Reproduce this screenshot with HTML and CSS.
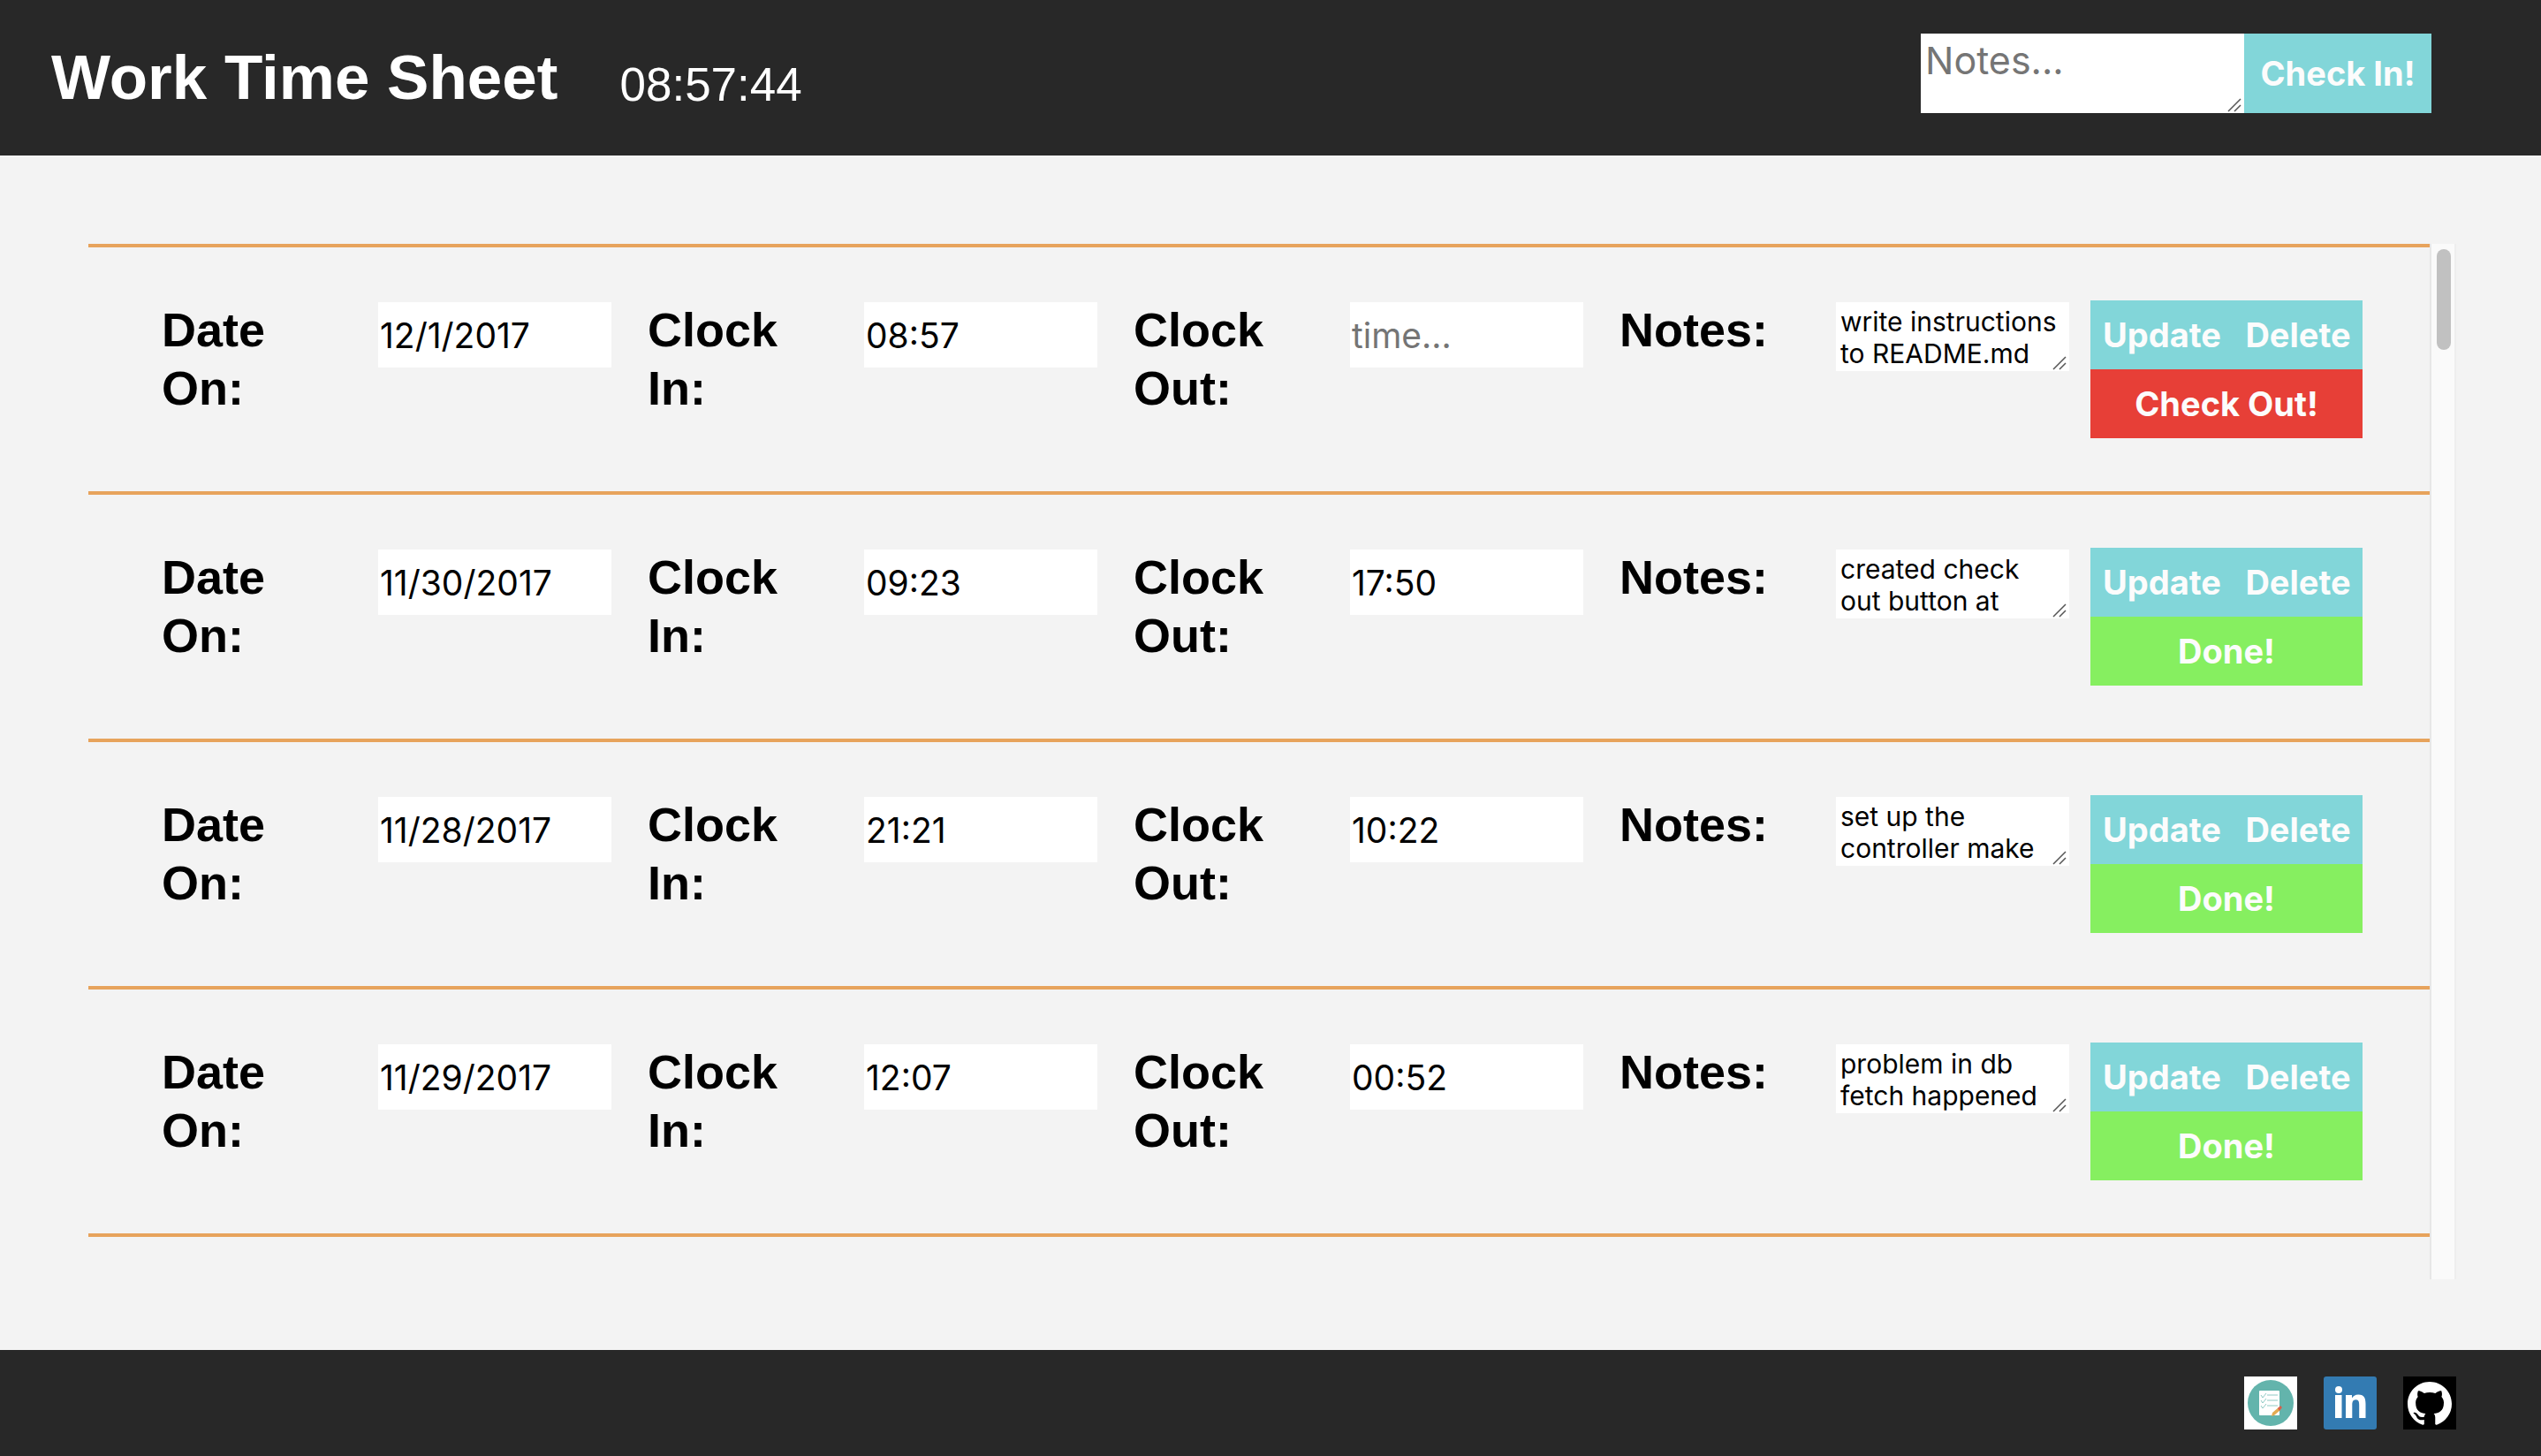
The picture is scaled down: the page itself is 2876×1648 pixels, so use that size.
FILE: index.html
```html
<!DOCTYPE html>
<html lang="en">
<head>
<meta charset="utf-8">
<meta name="viewport" content="width=device-width, initial-scale=1">
<title>Work Time Sheet</title>
<link rel="stylesheet" href="styles.css">
</head>
<body>
<header class="top-bar">
  <h1 class="title">Work Time Sheet</h1>
  <time class="clock">08:57:44</time>
  <form class="check-in">
    <textarea class="check-in-notes" placeholder="Notes..." aria-label="Notes"></textarea>
    <button class="btn check-in-btn" type="button">Check In!</button>
  </form>
</header>

<main class="sheet">
  <div class="entries">
    <form class="entry">
      <div class="fields">
        <div class="field"><label for="date-1">Date On:</label><input id="date-1" type="text" value="12/1/2017"></div>
        <div class="field"><label for="in-1">Clock In:</label><input id="in-1" type="text" value="08:57"></div>
        <div class="field"><label for="out-1">Clock Out:</label><input id="out-1" type="text" placeholder="time..."></div>
        <div class="field"><label for="notes-1">Notes:</label><textarea id="notes-1">write instructions to README.md</textarea></div>
      </div>
      <div class="actions">
        <button class="btn" type="button">Update</button><button class="btn" type="button">Delete</button>
        <button class="btn wide out" type="button">Check Out!</button>
      </div>
    </form>
    <form class="entry">
      <div class="fields">
        <div class="field"><label for="date-2">Date On:</label><input id="date-2" type="text" value="11/30/2017"></div>
        <div class="field"><label for="in-2">Clock In:</label><input id="in-2" type="text" value="09:23"></div>
        <div class="field"><label for="out-2">Clock Out:</label><input id="out-2" type="text" placeholder="time..." value="17:50"></div>
        <div class="field"><label for="notes-2">Notes:</label><textarea id="notes-2">created check out button at</textarea></div>
      </div>
      <div class="actions">
        <button class="btn" type="button">Update</button><button class="btn" type="button">Delete</button>
        <button class="btn wide done" type="button">Done!</button>
      </div>
    </form>
    <form class="entry">
      <div class="fields">
        <div class="field"><label for="date-3">Date On:</label><input id="date-3" type="text" value="11/28/2017"></div>
        <div class="field"><label for="in-3">Clock In:</label><input id="in-3" type="text" value="21:21"></div>
        <div class="field"><label for="out-3">Clock Out:</label><input id="out-3" type="text" placeholder="time..." value="10:22"></div>
        <div class="field"><label for="notes-3">Notes:</label><textarea id="notes-3">set up the controller make</textarea></div>
      </div>
      <div class="actions">
        <button class="btn" type="button">Update</button><button class="btn" type="button">Delete</button>
        <button class="btn wide done" type="button">Done!</button>
      </div>
    </form>
    <form class="entry">
      <div class="fields">
        <div class="field"><label for="date-4">Date On:</label><input id="date-4" type="text" value="11/29/2017"></div>
        <div class="field"><label for="in-4">Clock In:</label><input id="in-4" type="text" value="12:07"></div>
        <div class="field"><label for="out-4">Clock Out:</label><input id="out-4" type="text" placeholder="time..." value="00:52"></div>
        <div class="field"><label for="notes-4">Notes:</label><textarea id="notes-4">problem in db fetch happened</textarea></div>
      </div>
      <div class="actions">
        <button class="btn" type="button">Update</button><button class="btn" type="button">Delete</button>
        <button class="btn wide done" type="button">Done!</button>
      </div>
    </form>
  </div>
  <div class="scroll-track" aria-hidden="true"><div class="scroll-thumb"></div></div>
</main>

<footer class="bottom-bar">
  <a class="badge" href="#portfolio" aria-label="Portfolio">
    <svg viewBox="0 0 60 60">
      <rect width="60" height="60" fill="#fff"/>
      <circle cx="30" cy="30" r="26" fill="#63b4ac"/>
      <rect x="17" y="16" width="23" height="28" rx="1" fill="#fff"/>
      <g fill="none" stroke="#8fcac4" stroke-width="1">
        <path d="M19 21l2 3 4-5M19 27l2 3 4-5M19 33l2 3 4-5"/>
        <path d="M26 21h12M26 27h12M26 33h12"/>
      </g>
      <path d="M31 45l1-4 7-6 2 3-7 6z" fill="#e2ab52"/>
      <path d="M38 36l3-3 2 2-3 4z" fill="#d85f4c"/>
    </svg>
  </a>
  <a class="badge" href="#linkedin" aria-label="LinkedIn">
    <svg viewBox="0 0 60 60">
      <rect width="60" height="60" rx="3" fill="#337bb2"/>
      <circle cx="17" cy="15" r="4" fill="#fff"/>
      <path fill="#fff" d="M13 21h7.500v26H13zM25 21h7v3.600c1.200-2.300 3.700-4.200 7.300-4.200 6.900 0 8.200 4.600 8.200 10.600v16h-7.300V32.800c0-3.300-.2-6.600-3.700-6.600-3.600 0-4.200 2.800-4.200 6.300V47H25z"/>
    </svg>
  </a>
  <a class="badge" href="#github" aria-label="GitHub">
    <svg viewBox="0 0 60 60">
      <rect width="60" height="60" fill="#000"/>
      <g transform="translate(5 6) scale(3.125)">
        <path fill="#fff" d="M8 0C3.580 0 0 3.580 0 8c0 3.540 2.290 6.530 5.470 7.590.4.070.55-.17.55-.38 0-.19-.01-.82-.01-1.490-2.010.37-2.530-.49-2.690-.94-.09-.23-.48-.94-.82-1.130-.28-.15-.68-.52-.01-.53.63-.01 1.080.58 1.230.82.72 1.210 1.870.87 2.330.66.070-.52.28-.87.51-1.070-1.780-.2-3.640-.89-3.640-3.950 0-.87.31-1.590.82-2.150-.08-.2-.36-1.020.08-2.120 0 0 .67-.21 2.200.82.64-.18 1.320-.27 2-.27s1.360.09 2 .27c1.530-1.040 2.200-.82 2.200-.82.44 1.100.16 1.920.08 2.120.51.56.82 1.270.82 2.150 0 3.070-1.870 3.750-3.650 3.950.29.25.54.73.54 1.480 0 1.070-.01 1.930-.01 2.200 0 .21.15.46.55.38A8.010 8.010 0 0 0 16 8c0-4.420-3.580-8-8-8z"/>
      </g>
    </svg>
  </a>
</footer>
</body>
</html>
```
FILE: styles.css
```css
* {
  box-sizing: border-box;
}

body {
  margin: 0;
  min-height: 100vh;
  display: flex;
  flex-direction: column;
  background: #f3f3f3;
  color: #000;
  font-family: "Liberation Sans", Arial, sans-serif;
}

input,
textarea,
button {
  margin: 0;
  border: 0;
  border-radius: 0;
  font-family: Inter, sans-serif;
}

/* Header */
.top-bar {
  display: flex;
  align-items: center;
  height: 176px;
  padding: 0 124px 0 58px;
  background: #282828;
  color: #fff;
}

.title {
  margin: 0;
  font-size: 71px;
  line-height: 84px;
  font-weight: bold;
}

.clock {
  margin-left: 70px;
  padding-top: 16px;
  font-size: 53px;
  line-height: 60px;
}

.check-in {
  display: flex;
  height: 90px;
  margin-left: auto;
  margin-bottom: 10px;
}

textarea {
  overflow: hidden;
  resize: none;
  background: #fff url("data:image/svg+xml,%3Csvg xmlns='http://www.w3.org/2000/svg' width='16' height='16'%3E%3Cpath d='M1 15L15 1M8 15l7-7' stroke='%23555' stroke-width='1.500'/%3E%3C/svg%3E") no-repeat right 3px bottom 1px;
}

.check-in-notes {
  width: 366px;
  padding: 4px 5px;
  font-size: 43px;
  line-height: 52px;
}

::placeholder {
  color: #757575;
  opacity: 1;
}

.btn {
  padding: 0;
  background: #82d6d9;
  color: #fcfcfc;
  font-size: 38px;
  line-height: 46px;
  font-weight: bold;
}

.check-in-btn {
  width: 212px;
}

/* Entry list */
.sheet {
  flex: 1;
  display: flex;
  padding: 100px 96px 80px 100px;
}

.entries {
  flex: 1;
  border-top: 4px solid #e7a35c;
  align-self: flex-start;
}

.entry {
  display: flex;
  gap: 24px;
  padding: 60px 76px 60px 83px;
  border-bottom: 4px solid #e7a35c;
}

.fields {
  flex: 1;
  display: grid;
  grid-template-columns: repeat(4, 1fr);
  column-gap: 41px;
}

.field {
  display: flex;
  align-items: flex-start;
}

.field label {
  flex: 1;
  padding-right: 41px;
  font-size: 54px;
  line-height: 66px;
  font-weight: bold;
}

.field input,
.field textarea {
  width: 264px;
  margin-top: 2px;
}

.field input {
  height: 74px;
  padding: 2px;
  font-size: 39px;
}

.field textarea {
  height: 78px;
  padding: 4px 5px;
  font-size: 30px;
  line-height: 36px;
}

.actions {
  display: grid;
  grid-template-columns: 162px 146px;
  grid-auto-rows: 78px;
}

.wide {
  grid-column: 1 / -1;
}

.out {
  background: #e73f37;
}

.done {
  background: #86ef60;
}

.scroll-track {
  width: 30px;
  padding: 6px;
  background: #fafafa;
  border-left: 2px solid #e7e7e7;
  border-right: 2px solid #eee;
}

.scroll-thumb {
  width: 16px;
  height: 114px;
  border-radius: 8px;
  background: #c1c1c1;
}

/* Footer */
.bottom-bar {
  display: flex;
  justify-content: flex-end;
  align-items: center;
  gap: 30px;
  height: 120px;
  padding-right: 96px;
  background: #282828;
}

.badge,
.badge svg {
  display: block;
  width: 60px;
  height: 60px;
}
```
